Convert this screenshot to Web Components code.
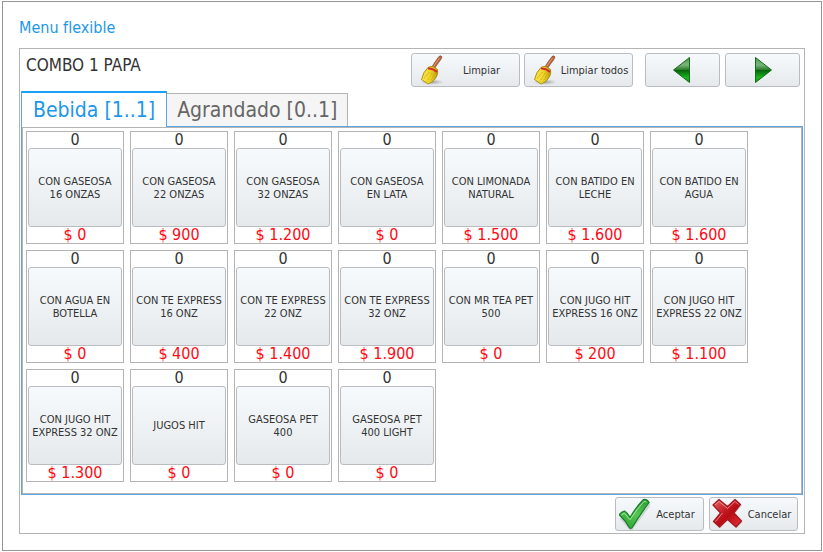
<!DOCTYPE html>
<html lang="es">
<head>
<meta charset="utf-8">
<title>Menu flexible</title>
<style>
html{
    height: 100%;
}
body{
    margin: 0;
    min-height: 100%;
    display: flex;
    box-sizing: border-box;
    padding: 1px 1px 1px 2px;
    background-color: white;
    color: #333;
    font-family: "DejaVu Sans Condensed", "Noto Sans", sans-serif;
    --line: #b4b4b4;
    --blue: #5ea6e4;
    --accent: #1c97ea;
    --face: linear-gradient(#f7fafd, #eef2f5 50%, #e5e9ec);
}
</style>
</head>
<body>
<menu-dialog heading="Menu flexible" combo="COMBO 1 PAPA">
  <tool-button slot="tools" icon="broom">Limpiar</tool-button>
  <tool-button slot="tools" icon="broom">Limpiar todos</tool-button>
  <tool-button slot="nav" icon="prev" label="Anterior"></tool-button>
  <tool-button slot="nav" icon="next" label="Siguiente"></tool-button>
  <tab-panel>
    <tab-item slot="tabs" selected>Bebida [1..1]</tab-item>
    <tab-item slot="tabs">Agrandado [0..1]</tab-item>
    <product-card count="0" price="$ 0">CON GASEOSA<br>16 ONZAS</product-card>
    <product-card count="0" price="$ 900">CON GASEOSA<br>22 ONZAS</product-card>
    <product-card count="0" price="$ 1.200">CON GASEOSA<br>32 ONZAS</product-card>
    <product-card count="0" price="$ 0">CON GASEOSA<br>EN LATA</product-card>
    <product-card count="0" price="$ 1.500">CON LIMONADA<br>NATURAL</product-card>
    <product-card count="0" price="$ 1.600">CON BATIDO EN<br>LECHE</product-card>
    <product-card count="0" price="$ 1.600">CON BATIDO EN<br>AGUA</product-card>
    <product-card count="0" price="$ 0">CON AGUA EN<br>BOTELLA</product-card>
    <product-card count="0" price="$ 400">CON TE EXPRESS<br>16 ONZ</product-card>
    <product-card count="0" price="$ 1.400">CON TE EXPRESS<br>22 ONZ</product-card>
    <product-card count="0" price="$ 1.900">CON TE EXPRESS<br>32 ONZ</product-card>
    <product-card count="0" price="$ 0">CON MR TEA PET<br>500</product-card>
    <product-card count="0" price="$ 200">CON JUGO HIT<br>EXPRESS 16 ONZ</product-card>
    <product-card count="0" price="$ 1.100">CON JUGO HIT<br>EXPRESS 22 ONZ</product-card>
    <product-card count="0" price="$ 1.300">CON JUGO HIT<br>EXPRESS 32 ONZ</product-card>
    <product-card count="0" price="$ 0">JUGOS HIT</product-card>
    <product-card count="0" price="$ 0">GASEOSA PET<br>400</product-card>
    <product-card count="0" price="$ 0">GASEOSA PET<br>400 LIGHT</product-card>
  </tab-panel>
  <tool-button slot="actions" icon="check">Aceptar</tool-button>
  <tool-button slot="actions" icon="cross">Cancelar</tool-button>
</menu-dialog>

<template id="menu-dialog">
<style>
:host{
    flex: 1;
    min-width: 0;
    display: flex;
    flex-direction: column;
    box-sizing: border-box;
    border: 1px solid #969696;
    padding: 16px 16px;
}
h1{
    margin: 0;
    padding-bottom: 11px;
    font-size: 16px;
    line-height: 19px;
    font-weight: 400;
    color: var(--accent);
}
.frame{
    flex: 1;
    display: flex;
    flex-direction: column;
    border: 1px solid var(--line);
    padding: 4px 1px 2px;
}
header{
    display: flex;
    align-items: flex-start;
    padding: 0 3px 4px 5px;
}
h2{
    flex: 1;
    margin: 0;
    padding-top: 2px;
    font-size: 17px;
    line-height: 20px;
    font-weight: 400;
}
.tools,
.nav{
    display: grid;
    grid-auto-flow: column;
    gap: 4px;
    grid-auto-columns: 109px;
}
.nav{
    gap: 5px;
    grid-auto-columns: 75px;
    margin-left: 12px;
}
.body{
    flex: 1;
    display: flex;
}
footer{
    display: grid;
    grid-auto-flow: column;
    grid-auto-columns: 89px;
    justify-content: end;
    gap: 5px;
    padding: 2px 5px 0;
}
</style>
<h1></h1>
<div class="frame">
  <header>
    <h2></h2>
    <div class="tools"><slot name="tools"></slot></div>
    <div class="nav"><slot name="nav"></slot></div>
  </header>
  <div class="body"><slot></slot></div>
  <footer><slot name="actions"></slot></footer>
</div>
</template>

<template id="tool-button">
<style>
:host{
    display: block;
}
button{
    display: flex;
    align-items: center;
    justify-content: center;
    width: 100%;
    height: 34px;
    padding: 0 2px;
    border: 1px solid #b9bdc1;
    border-radius: 3px;
    background: var(--face);
    color: inherit;
    font-family: inherit;
    font-size: 11px;
    line-height: 13px;
    white-space: nowrap;
}
svg{
    flex: none;
    width: 32px;
    height: 32px;
}
.text{
    flex: 1;
}
.text[hidden]{
    display: none;
}
</style>
<button type="button"><svg viewBox="0 0 32 32" aria-hidden="true"></svg><span class="text"><slot></slot></span></button>
</template>

<template id="tab-panel">
<style>
:host{
    flex: 1;
    min-width: 0;
    display: flex;
    flex-direction: column;
}
.tabs{
    display: flex;
    align-items: flex-end;
    margin-bottom: -1px;
}
.pane{
    flex: 1;
    border: 1px solid var(--blue);
}
.grid{
    height: 100%;
    box-sizing: border-box;
    border: 1px solid var(--line);
    padding: 3px;
    display: grid;
    grid-template-columns: repeat(auto-fill, 98px);
    align-content: start;
    gap: 6px;
}
</style>
<div class="tabs" role="tablist"><slot name="tabs"></slot></div>
<div class="pane"><div class="grid"><slot></slot></div></div>
</template>

<template id="tab-item">
<style>
:host{
    display: block;
}
:host([selected]){
    position: relative;
}
button{
    display: block;
    height: 34px;
    padding: 0 10px;
    border: 1px solid var(--line);
    border-left: 0;
    border-bottom-color: var(--blue);
    background-color: #f5f5f5;
    color: #666;
    font-family: inherit;
    font-size: 21px;
    line-height: 30px;
}
:host([selected]) button{
    height: 36px;
    padding: 0 11px;
    border: solid var(--blue);
    border-width: 2px 1px 0;
    border-top-color: #1ba1f6;
    background-color: white;
    color: var(--accent);
}
</style>
<button type="button" role="tab"><slot></slot></button>
</template>

<template id="product-card">
<style>
:host{
    display: flex;
    flex-direction: column;
    border: 1px solid var(--line);
    padding: 0 1px;
    text-align: center;
    font-size: 16px;
    line-height: 16px;
}
button{
    height: 79px;
    padding: 0;
    border: 1px solid #b9bdc1;
    border-radius: 3px;
    background: var(--face);
    color: inherit;
    font-family: inherit;
    font-size: 11px;
    line-height: 13px;
    white-space: nowrap;
}
.price{
    color: #ff0a14;
}
</style>
<span class="count"></span>
<button type="button"><slot></slot></button>
<span class="price"></span>
</template>

<script>
const icons = {
  broom: `
    <defs>
      <linearGradient id="straw"><stop offset="0" stop-color="#f9e64a"/><stop offset=".55" stop-color="#efd526"/><stop offset="1" stop-color="#b99a10"/></linearGradient>
      <radialGradient id="shade"><stop offset="0" stop-color="#777" stop-opacity=".7"/><stop offset="1" stop-color="#999" stop-opacity="0"/></radialGradient>
    </defs>
    <ellipse cx="18" cy="28" rx="12" ry="3" fill="url(#shade)"/>
    <path d="M25 2.500Q27 1 28 3Q27 6 23.500 10L20 15L17.500 13.500L21 8Z" fill="#b8683f" stroke="#8b4529" stroke-width=".7"/>
    <path d="M25.500 4L19.500 12.500" stroke="#dd9b70"/>
    <path d="M14 13.500Q18.500 10.500 23.500 15.500Q25 22 18 28L14 30L7.500 25.500Q9 18 14 13.500Z" fill="url(#straw)" stroke="#a68513" stroke-width=".9"/>
    <path d="M15.500 18L9.500 25M18 19L13 27.500M21 19.500L16 27.500" stroke="#c7a216" stroke-width=".8" stroke-dasharray="2 1" fill="none"/>
    <path d="M14 14.500Q18.500 14 23 18" stroke="#d52b2b" stroke-width="2" fill="none"/>`,
  prev: `
    <defs><linearGradient id="dark" x2="0" y2="1"><stop offset="0" stop-color="#4c9a4c"/><stop offset=".3" stop-color="#79b579"/><stop offset=".49" stop-color="#2a7b2a"/><stop offset=".51" stop-color="#07620c"/><stop offset=".8" stop-color="#19b41d"/><stop offset="1" stop-color="#159819"/></linearGradient></defs>
    <path d="M22.500 3.500V28.500L6.500 16Z" fill="url(#dark)" stroke="#15691a"/>`,
  next: `
    <defs><linearGradient id="dark" x2="0" y2="1"><stop offset="0" stop-color="#4c9a4c"/><stop offset=".3" stop-color="#79b579"/><stop offset=".49" stop-color="#2a7b2a"/><stop offset=".51" stop-color="#07620c"/><stop offset=".8" stop-color="#19b41d"/><stop offset="1" stop-color="#159819"/></linearGradient></defs>
    <path d="M8.500 3.500V28.500L24.500 16Z" fill="url(#dark)" stroke="#15691a"/>`,
  check: `
    <defs><linearGradient id="green" x1=".2" y1="1" x2=".9" y2="0"><stop offset="0" stop-color="#2ba534"/><stop offset=".5" stop-color="#55c653"/><stop offset="1" stop-color="#2f9c39"/></linearGradient></defs>
    <path d="M3 20L13 31L32 6" fill="none" stroke="#000" stroke-opacity=".12" stroke-width="3"/>
    <path d="M1.500 17Q1.500 15 6.500 13Q10 15 12 19.500Q18 9 25.500 1.500Q29 1 31.200 4.500Q23 15 14.500 29Q13.500 31 11.500 30Q8 23 1.500 17Z" fill="url(#green)" stroke="#187d26" stroke-width="1.200" stroke-linejoin="round"/>
    <path d="M3.300 17L6.500 15.200L12 21.700Q19 11 26 3.400L28.500 4" fill="none" stroke="#a3e59c" stroke-width="1"/>`,
  cross: `
    <defs><linearGradient id="red" x2="1" y2="1"><stop offset="0" stop-color="#e56a6a"/><stop offset=".4" stop-color="#c41c24"/><stop offset=".55" stop-color="#b80d16"/><stop offset="1" stop-color="#e3323a"/></linearGradient></defs>
    <path d="M3 8L8 2.500L17 10L24.500 2L30 7.500L22.500 15.500L30.500 24L24.500 30L16 21.500L8.500 30L3 25L10.500 16.500Z" fill="#000" opacity=".16"/>
    <path d="M1 7L7 1.500L15.500 8.500L23 1.500L28.500 6.500L22 15L29.500 23L24 29L15.500 21.500L7.500 29L1.500 23.500L8.500 15Z" fill="url(#red)" stroke="#a41820" stroke-width="1.200" stroke-linejoin="round"/>
    <path d="M3 7L7 3.500L15.500 10.500L23 3.500L26.500 6.500M3.500 23.500L10.500 15" fill="none" stroke="#f09a9a" stroke-width=".8"/>`
};

class BaseElement extends HTMLElement{
    constructor(){
        super();

        const template = document.getElementById(this.localName);
        this.attachShadow({ mode: 'open' });
        this.shadowRoot.appendChild(template.content.cloneNode(true));
    }
}

class MenuDialog extends BaseElement{
    constructor(){
        super();
        this.shadowRoot.querySelector('h1').textContent = this.getAttribute('heading');
        this.shadowRoot.querySelector('h2').textContent = this.getAttribute('combo');
    }
}

class ToolButton extends BaseElement{
    constructor(){
        super();
        this.shadowRoot.querySelector('svg').innerHTML = icons[this.getAttribute('icon')];
        // icon-only buttons have no text, so they need a name
        if (this.hasAttribute('label')) {
            this.shadowRoot.querySelector('button').setAttribute('aria-label', this.getAttribute('label'));
            this.shadowRoot.querySelector('.text').hidden = true;
        }
    }
}

class TabPanel extends BaseElement{
    constructor(){
        super();
        this.addEventListener('click', (event) => {
            const tab = event.target.closest('tab-item');
            if (!tab) return;
            this.querySelectorAll('tab-item').forEach((item) => {
                item.toggleAttribute('selected', item === tab);
            });
        });
    }
}

class TabItem extends BaseElement{
    static observedAttributes = ['selected'];

    attributeChangedCallback(){
        this.shadowRoot.querySelector('button').setAttribute('aria-selected', this.hasAttribute('selected'));
    }
}

class ProductCard extends BaseElement{
    constructor(){
        super();
        this.shadowRoot.querySelector('.count').textContent = this.getAttribute('count');
        this.shadowRoot.querySelector('.price').textContent = this.getAttribute('price');
    }
}

window.customElements.define('menu-dialog', MenuDialog);
window.customElements.define('tool-button', ToolButton);
window.customElements.define('tab-panel', TabPanel);
window.customElements.define('tab-item', TabItem);
window.customElements.define('product-card', ProductCard);
</script>
</body>
</html>
